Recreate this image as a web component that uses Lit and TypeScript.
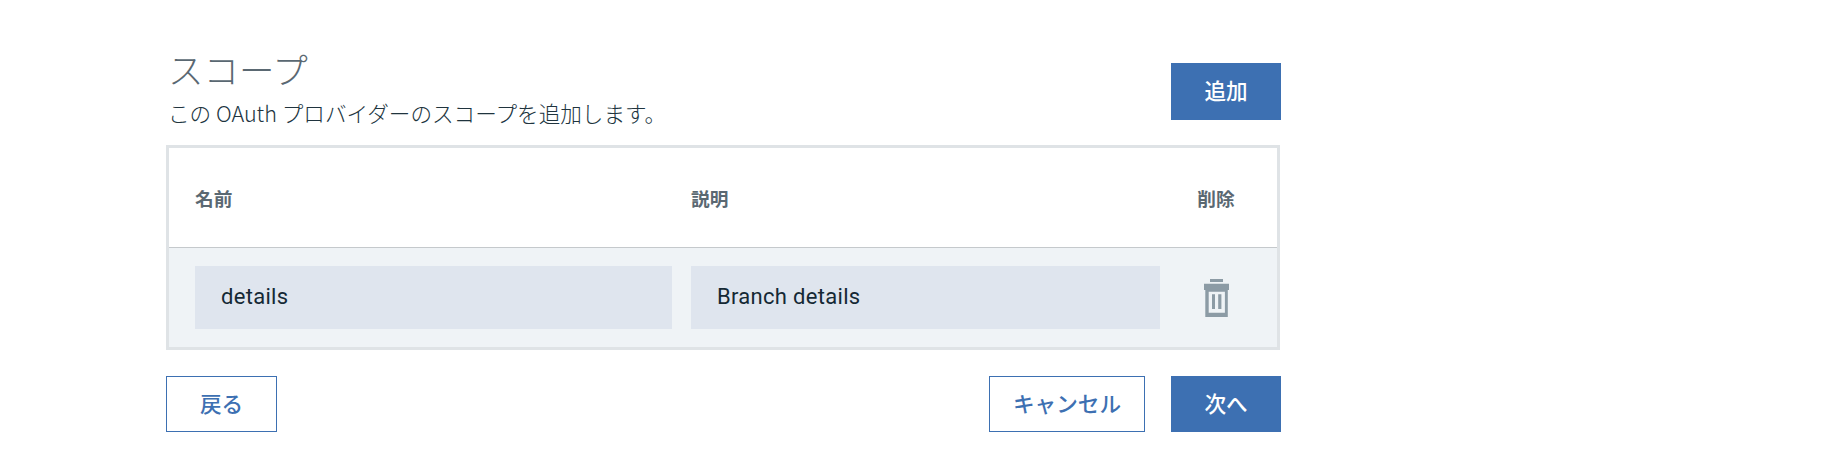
import { LitElement, html, css } from "lit";
import { customElement, property } from "lit/decorators.js";

interface Scope {
  name: string;
  description: string;
}

@customElement("app-button")
class AppButton extends LitElement {
  @property({ reflect: true }) kind: "primary" | "secondary" = "primary";

  static styles = css`
    :host {
      display: block;
      width: 110px;
      height: 56px;
    }
    .button {
      display: block;
      box-sizing: border-box;
      width: 100%;
      height: 100%;
      margin: 0;
      padding: 0 0 3px;
      border: 1px solid #3d70b2;
      border-radius: 0;
      background: #3d70b2;
      color: #fff;
      font: 500 21.6px/30px "Noto Sans CJK JP", sans-serif;
      text-align: center;
      white-space: nowrap;
    }
    :host([kind="secondary"]) .button {
      background: #fff;
      color: #3d70b2;
    }
  `;

  render() {
    return html`<button class="button"><slot></slot></button>`;
  }
}

@customElement("app-root")
class AppRoot extends LitElement {
  @property({ attribute: false }) scopes: Scope[] = [
    { name: "details", description: "Branch details" },
  ];

  static styles = css`
    :host {
      display: block;
      box-sizing: border-box;
      height: 472px;
      padding: 45px 541px 0 166px;
      background: #fff;
      font-family: "Noto Sans CJK JP", sans-serif;
    }
    .heading {
      display: flex;
      justify-content: space-between;
      height: 100px;
    }
    .add {
      height: 57px;
      margin-top: 18px;
    }
    .title {
      margin: 0;
      padding-left: 2px;
      font-size: 35.5px;
      font-weight: 300;
      line-height: 48px;
      color: #5a6872;
    }
    .text {
      margin: 5px 0 0;
      padding-left: 2px;
      font-size: 21.6px;
      font-weight: 300;
      line-height: 30px;
      color: #20343e;
      white-space: nowrap;
    }
    .table {
      box-sizing: border-box;
      width: 1114px;
      border: 3px solid #dfe3e6;
    }
    .row {
      display: grid;
      grid-template-columns: 477px 469px 74px;
      column-gap: 19px;
      align-items: center;
      height: 99px;
      padding-left: 26px;
      background: #eff3f6;
    }
    .head {
      border-bottom: 1px solid #c5c9cc;
      background: #fff;
      color: #5a6872;
      font-size: 18.7px;
      font-weight: 600;
      line-height: 28px;
    }
    .center {
      display: flex;
      justify-content: center;
    }
    .input {
      box-sizing: border-box;
      width: 100%;
      height: 63px;
      margin: 0;
      padding: 0 26px 2px;
      border: 0;
      border-radius: 0;
      background: #dfe5ee;
      color: #152935;
      font: 400 22px/30px Roboto, sans-serif;
      letter-spacing: 0.3px;
    }
    .trash {
      display: block;
      width: 25px;
      height: 38px;
      fill: #8c9ba5;
    }
    .actions {
      display: flex;
      gap: 26px;
      margin-top: 26px;
    }
    .back {
      width: 111px;
      margin-right: auto;
    }
    .cancel {
      width: 156px;
    }
  `;

  render() {
    return html`
      <header class="heading">
        <div>
          <h1 class="title">スコープ</h1>
          <p class="text">この OAuth プロバイダーのスコープを追加します。</p>
        </div>
        <app-button class="add">追加</app-button>
      </header>
      <section class="table">
        <div class="row head">
          <span>名前</span><span>説明</span><span class="center">削除</span>
        </div>
        ${this.scopes.map(
          (scope) => html`
            <div class="row">
              <input class="input" .value=${scope.name} />
              <input class="input" .value=${scope.description} />
              <span class="center">
                <svg class="trash" viewBox="0 0 25 38">
                  <path d="M6 0h13v3H6zM0 4.7h25V11H0z" />
                  <path fill-rule="evenodd" d="M1.3 11h22.5v27H1.3zM4.7 12.7v21h16.2v-21z" />
                  <path d="M8 15.3h3V30H8zM14.2 15.3h3.2V30h-3.2z" />
                </svg>
              </span>
            </div>
          `
        )}
      </section>
      <footer class="actions">
        <app-button class="back" kind="secondary">戻る</app-button>
        <app-button class="cancel" kind="secondary">キャンセル</app-button>
        <app-button>次へ</app-button>
      </footer>
    `;
  }
}
